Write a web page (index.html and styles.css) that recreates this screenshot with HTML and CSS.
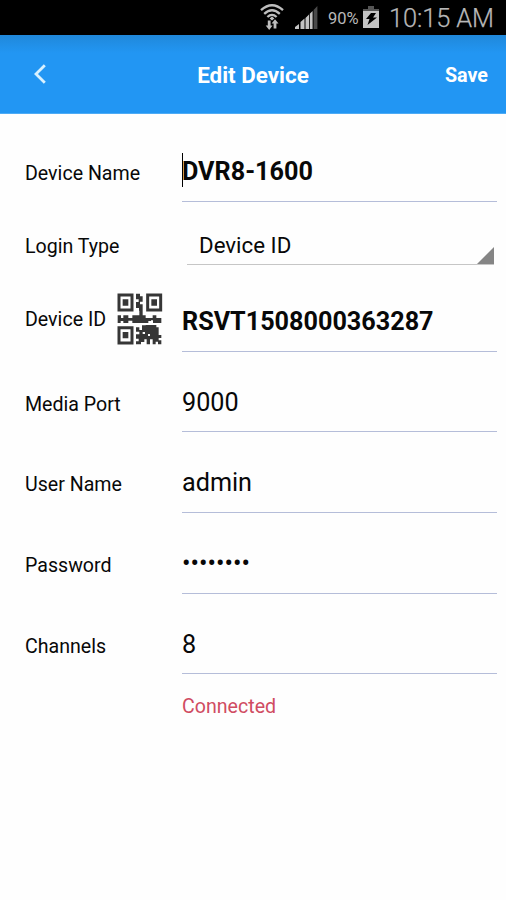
FILE: index.html
```html
<!DOCTYPE html>
<html lang="en">
<head>
<meta charset="utf-8">
<title>Edit Device</title>
<link rel="stylesheet" href="styles.css">
</head>
<body>
<div class="status">
  <svg class="wifi" width="26" height="30" viewBox="0 0 26 30">
    <g fill="none" stroke="#bebebe" stroke-width="2.3">
      <path d="M2 7.2Q13-2.8 24 7.2"/>
      <path d="M5.2 10.8Q13 3.6 20.8 10.8"/>
      <path d="M8.4 14Q13 9.8 17.6 14"/>
    </g>
    <path fill="#bebebe" d="M13 13.6l2.4 1.9-2.4 2.1-2.4-2.1zM8.8 17.5h2.8v5h2L10.2 27l-3.5-4.5h2.1zM14.6 25.5v-5h-2l3.4-4.3 3.5 4.3h-2.1v5z"/>
  </svg>
  <svg class="signal" width="24" height="24" viewBox="0 0 24 24">
    <path fill="#c4c4c4" d="M0 23v-2l4-3v5zM5.5 23v-7l4-3.5V23zM10.5 23V12L14 8.5V23zM14.8 23V7.8l2.8-2.8v18z"/>
    <path fill="#4a4a4a" d="M18.6 23V4L22.4 0v23z"/>
  </svg>
  <span class="percent">90%</span>
  <svg class="battery" width="17" height="23" viewBox="0 0 17 23">
    <path fill="#555" d="M5 0h6v3h5v3H0V3h5z"/>
    <path fill="#c4c4c4" d="M0 5h16v17H0z"/>
    <path fill="#000" d="M8 7h5l-3 4.5h4L4.5 19l2-6H3z"/>
  </svg>
  <span class="clock">10:15 AM</span>
</div>
<header class="bar">
  <svg class="back" width="14" height="22" viewBox="0 0 14 22"><path d="M11.8 2.2L3 11l8.8 8.8" fill="none" stroke="#d8f1ff" stroke-width="2.8"/></svg>
  <h1 class="title">Edit Device</h1>
  <span class="save">Save</span>
</header>
<main class="form">
  <div class="row name"><span class="label">Device Name</span><span class="value bold"><i class="caret"></i><span class="text">DVR8-1600</span></span></div>
  <div class="row login"><span class="label">Login Type</span><span class="value select"><span class="text">Device ID</span></span></div>
  <div class="row id"><span class="label">Device ID</span>
    <svg class="qr" width="46" height="52" viewBox="22 22 138 156">
      <g fill="none" stroke="#363636" stroke-width="9">
        <path d="M28 28h39v45H28zM114 28h39v45h-39zM28 126h39v46H28z"/>
      </g>
      <path fill="#363636" d="M39 41h17v19H39zM125 41h17v19h-17zM39 139h17v19H39zM79 24h12v8h8v16h-8v8h8v19h-11v-8h-9V49h8V41h-8zM89 74h10v15h9v8h16v9h-8v6H68v-7H56v7H41v-6h-8v6h-9V89h10v8h7v-8h15v8h12v-8h21zM129 89h11v8h15v15h-25v-8h-8v-7h7zM97 119h11v-1h32v7h7v23h8v9h-8v7h8v12h-10v-8h-7v8h-9v-15h-8v15h-10v-15h-7v8h-10v7H79v-9h8v-8h-8v-13h10v-8H79v-13h10v8h8z"/>
      <path fill="#fefefe" d="M99 139h7v6h-7zM115 145h6v6h-6z"/>
    </svg>
    <span class="value bold"><span class="text">RSVT1508000363287</span></span></div>
  <div class="row port"><span class="label">Media Port</span><span class="value"><span class="text">9000</span></span></div>
  <div class="row user"><span class="label">User Name</span><span class="value"><span class="text">admin</span></span></div>
  <div class="row pass"><span class="label">Password</span><span class="value dots"><span class="text">••••••••</span></span></div>
  <div class="row chan"><span class="label">Channels</span><span class="value"><span class="text">8</span></span></div>
  <p class="state">Connected</p>
</main>
</body>
</html>
```
FILE: styles.css
```css
* { box-sizing: border-box; }
body { margin: 0; height: 900px; background: #fefefe; color: #080808; font-family: Roboto, sans-serif; }
svg { display: block; flex: none; }
.status { display: flex; height: 35px; padding-left: 259px; background: #000; color: #b8b8b8; align-items: flex-start; white-space: nowrap; }
.wifi { margin-top: 3px; }
.signal { margin: 6px 0 0 10px; }
.percent { width: 34px; margin-left: 9px; font-size: 16.5px; line-height: 37px; }
.battery { margin: 6px 0 0 1px; }
.clock { margin-left: 9px; font-size: 25.4px; line-height: 37px; font-weight: 300; letter-spacing: -0.1px; -webkit-text-stroke: 0.25px #b8b8b8; }
.bar { display: grid; grid-template-columns: 90px 1fr 90px; align-items: center; height: 79px; background: linear-gradient(#2088da, #2296f3 18px); border-bottom: 1px solid #4dabf5; color: #fff; }
.back { margin: 0 0 0 33px; }
.title { margin: 1px 0 0; text-align: center; font-size: 22.4px; line-height: 28px; font-weight: 700; }
.save { margin-top: 2px; padding-right: 18px; text-align: right; font-size: 19.7px; font-weight: 700; }
.form { padding: 42px 9px 0 25px; }
.row { display: grid; grid-template-columns: 157px 1fr; align-items: start; height: 46px; position: relative; }
.label { padding-top: 4px; font-size: 19.6px; line-height: 28px; white-space: nowrap; }
.value { height: 100%; border-bottom: 1px solid #b5bdd9; font-size: 25.2px; line-height: 31px; white-space: nowrap; }
.bold { font-weight: 700; }
.caret { position: absolute; width: 1px; height: 34px; margin-top: -3px; background: #000; }
.login { height: 34px; margin-top: 29px; }
.login .label { padding-top: 2px; }
.select { position: relative; margin: 0 3px 0 5px; padding-left: 12px; border-color: #c6c6c6; font-size: 22.3px; line-height: 28px; }
.select::after { content: ""; position: absolute; right: 0; bottom: 0; width: 17px; height: 17px; background: #858585; clip-path: polygon(100% 0, 100% 100%, 0 100%); }
.id { grid-template-columns: 92px 46px 1fr; height: 59px; margin-top: 28px; }
.id .label { padding-top: 13px; }
.id .value { margin-left: 19px; padding-top: 13px; }
.port { margin-top: 34px; }
.user, .pass { margin-top: 35px; }
.chan { margin-top: 34px; }
.port .value, .chan .value { padding-top: 1px; }
.port .label, .chan .label { padding-top: 5px; }
.state { margin: 19px 0 0 157px; color: #d04c62; font-size: 19.6px; line-height: 28px; }
```
